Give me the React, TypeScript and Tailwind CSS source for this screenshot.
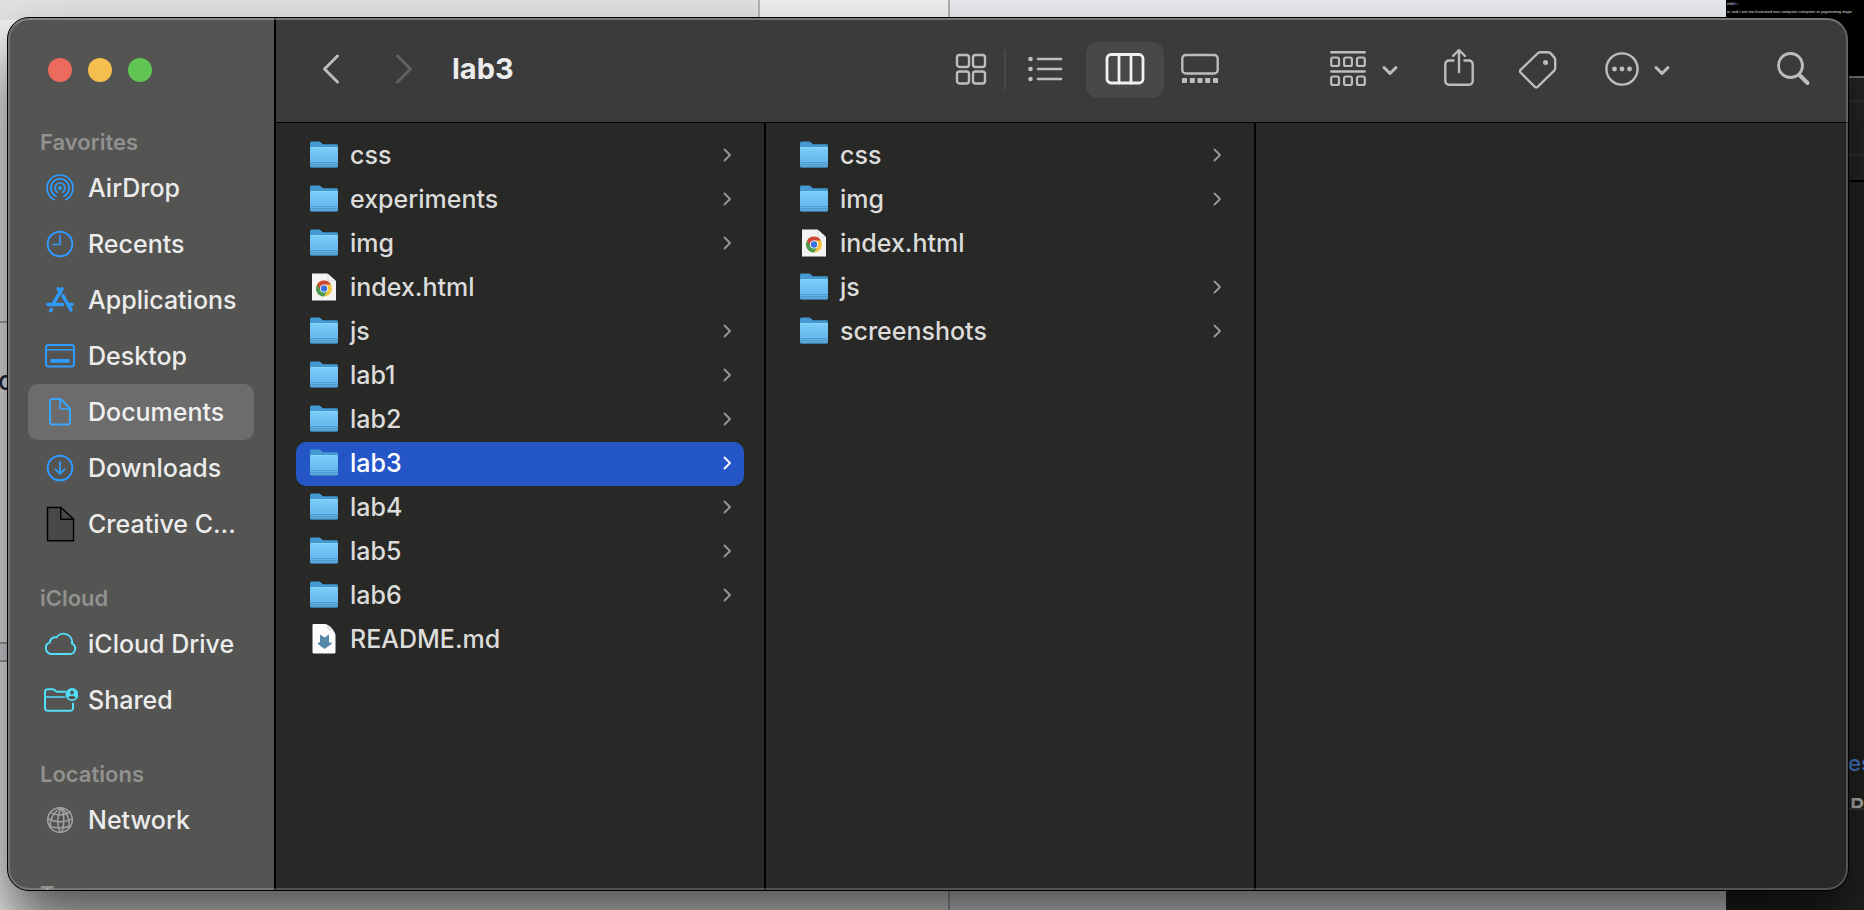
import type { ReactNode } from "react";

type Entry = { name: string; kind: "folder" | "html" | "md" };

const parentEntries: Entry[] = [
  { name: "css", kind: "folder" },
  { name: "experiments", kind: "folder" },
  { name: "img", kind: "folder" },
  { name: "index.html", kind: "html" },
  { name: "js", kind: "folder" },
  { name: "lab1", kind: "folder" },
  { name: "lab2", kind: "folder" },
  { name: "lab3", kind: "folder" },
  { name: "lab4", kind: "folder" },
  { name: "lab5", kind: "folder" },
  { name: "lab6", kind: "folder" },
  { name: "README.md", kind: "md" },
];

const childEntries: Entry[] = [
  { name: "css", kind: "folder" },
  { name: "img", kind: "folder" },
  { name: "index.html", kind: "html" },
  { name: "js", kind: "folder" },
  { name: "screenshots", kind: "folder" },
];

/* ---------- File icons ---------- */

function FolderIcon() {
  return (
    <svg width="28" height="28" viewBox="0 0 28 28" aria-hidden="true">
      <defs>
        <linearGradient id="folderFront" x1="0" y1="0" x2="0" y2="1">
          <stop offset="0" stopColor="#7ccdf8" />
          <stop offset="0.7" stopColor="#68b9ee" />
          <stop offset="1" stopColor="#57a5da" />
        </linearGradient>
      </defs>
      <path d="M0 2.2C0 1 .8.5 1.8.5h6.6c1.4 0 2 .5 2.8 1.3.8.9 1.4 1.5 2.8 1.5h12.4c1 0 1.6.6 1.6 1.6V10H0z" fill="#4599d3" />
      <path d="M0 7.3C0 6.5.5 6.2 1.2 6.2h25.6c.8 0 1.2.3 1.2 1.1V25c0 .9-.6 1.4-1.4 1.4H1.4C.6 26.4 0 25.9 0 25z" fill="url(#folderFront)" />
      <path d="M.6 6.7h26.8" stroke="#8bdcfb" strokeWidth=".8" />
      <path d="M0 21.500h28M0 23.500h28" stroke="#4390c4" strokeWidth=".8" opacity=".8" />
      <path d="M.6 26.3h26.8" stroke="#3d83b5" strokeWidth=".8" />
    </svg>
  );
}

function HtmlIcon() {
  return (
    <svg width="28" height="28" viewBox="0 0 28 28" aria-hidden="true">
      <path d="M2 .5h15.5L26 8v19.5H2z" fill="#f4f4f4" />
      <path d="M17.5.5 26 8.300h-7.5a1 1 0 0 1-1-1z" fill="#d2d2d2" />
      <path d="M18.5 1.5 25 7.5h-5.5a1 1 0 0 1-1-1z" fill="#fafafa" />
      <circle cx="14" cy="15.5" r="8" fill="#f3c443" />
      <path d="M7.072 11.5A8 8 0 0 0 14 23.5l3.464-6L14 15.5z" fill="#4a9a51" />
      <path d="M7.072 11.5A8 8 0 0 1 20.928 11.5H14v4h-4.500z" fill="#cf4638" />
      <circle cx="14" cy="15.5" r="4" fill="#fff" />
      <circle cx="14" cy="15.5" r="3.2" fill="#3a70de" />
    </svg>
  );
}

function MarkdownIcon() {
  return (
    <svg width="28" height="32" viewBox="0 0 28 32" aria-hidden="true">
      <path d="M3.5 1H15c5 1.5 9 6 10.5 11v17.5a1 1 0 0 1-1 1h-21a1 1 0 0 1-1-1V2a1 1 0 0 1 1-1z" fill="#fdfdfd" />
      <path d="M15 1c2 1.3 2.3 3.5 2.5 5.5 3.5.3 6.5 1.8 8 5.5C24 6.5 20 2.300 15 1z" fill="#e2e2e2" />
      <path d="M10 11.5l4.5 3 4.500-3v8h2.5v1.5L14.5 26 8 21v-1.5h2z" fill="#5588a6" />
    </svg>
  );
}

const entryIcons: Record<Entry["kind"], ReactNode> = {
  folder: <FolderIcon />,
  html: <HtmlIcon />,
  md: <MarkdownIcon />,
};

/* ---------- Sidebar icons ---------- */

function SideSvg({ children, tone = "text-[#2f9bff]" }: { children: ReactNode; tone?: string }) {
  return (
    <svg
      width="36"
      height="36"
      viewBox="0 0 36 36"
      fill="none"
      stroke="currentColor"
      strokeWidth="2"
      strokeLinecap="round"
      strokeLinejoin="round"
      className={tone}
      aria-hidden="true"
    >
      {children}
    </svg>
  );
}

const AirDropIcon = (
  <SideSvg>
    <circle cx="18" cy="18" r="2" fill="currentColor" stroke="none" />
    <g strokeWidth="1.7">
      <path d="M15.3 22.2a5 5 0 1 1 5.4 0" />
      <path d="M14 26.2a9.1 9.1 0 1 1 8 0" />
      <path d="M12.3 29.7a13 13 0 1 1 11.4 0" />
    </g>
  </SideSvg>
);

const RecentsIcon = (
  <SideSvg>
    <circle cx="18" cy="18" r="12.3" />
    <path d="M18 9.5V18.500h-7" strokeWidth="1.6" />
  </SideSvg>
);

const ApplicationsIcon = (
  <SideSvg>
    <g strokeWidth="3.4">
      <path d="M20 6.8 12 20.300M16.2 6.8l2.3 3.700" />
      <path d="M6 22.5h14.500M27 22.500h3" />
      <path d="M21 13.8 29 28M9.500 27.500l-1 1.3" />
    </g>
  </SideSvg>
);

const DesktopIcon = (
  <SideSvg>
    <rect x="4" y="7" width="28" height="21.5" rx="2.5" />
    <path d="M4 11.8h28" strokeWidth="1.6" />
    <rect x="8.5" y="21" width="19" height="3.8" rx=".8" fill="currentColor" stroke="none" />
  </SideSvg>
);

const DocumentsIcon = (
  <SideSvg tone="text-[#3aa4ff]">
    <path d="M10 5h8.500L28 14.500V28a2.500 2.500 0 0 1-2.500 2.500H10.500A2.500 2.500 0 0 1 8 28V7.500A2.500 2.500 0 0 1 10 5z" />
    <path d="M18.2 5.500v8c0 1 .5 1.5 1.5 1.500h8" strokeWidth="1.7" />
  </SideSvg>
);

const DownloadsIcon = (
  <SideSvg>
    <circle cx="18" cy="18" r="12.3" />
    <path d="M18 12v11.500M13.500 19.300 18 23.800l4.500-4.500" strokeWidth="1.8" />
  </SideSvg>
);

const BlankFileIcon = (
  <SideSvg tone="text-black">
    <g strokeWidth="1.4" strokeLinejoin="miter">
      <path d="M5.500 1.500H19L31.500 13v21.800h-26z" fill="#484847" />
      <path d="M18.700 1.500v11.700h12.800" />
    </g>
  </SideSvg>
);

const CloudIcon = (
  <SideSvg tone="text-[#53defa]">
    <path d="M9 28a6 6 0 0 1-1.200-11.600 5.300 5.300 0 0 1 6.600-4.900 8.600 8.600 0 0 1 15.600 6.200 5.400 5.400 0 0 1-2.500 10.300z" />
  </SideSvg>
);

const SharedIcon = (
  <SideSvg tone="text-[#53defa]">
    <path d="M23 9.700h-8.300l-2.200-1.800c-.7-.5-1.200-.7-2.200-.7H5.800A2.800 2.800 0 0 0 3 10v16a2.800 2.800 0 0 0 2.800 2.800h22.400A2.800 2.800 0 0 0 31 26v-4.500" />
    <path d="M3 15h19.500" strokeWidth="1.7" />
    <circle cx="30" cy="12.500" r="6.500" fill="currentColor" stroke="none" />
    <circle cx="30" cy="10.500" r="1.900" fill="#545452" stroke="none" />
    <path d="M26.300 15.800c.7-2.800 6.700-2.800 7.400 0-2 2-5.400 2-7.400 0z" fill="#545452" stroke="none" />
  </SideSvg>
);

const NetworkIcon = (
  <SideSvg tone="text-[#a0a09f]">
    <g strokeWidth="1.5">
      <circle cx="18" cy="18" r="12.3" />
      <path d="M19.500 5.800c-8 4-12 12-11.200 19.200M19.500 5.800c-4 7-5 16-1.500 24.400M19.500 5.800c3 6 3 16 .500 24.400M19.500 5.800c6 5 8.500 12 7.500 20" />
      <path d="M8.500 10.500c5 3.500 14 3.500 19.500-.8M5.900 16.500c6.500 4.200 17.500 4.200 24.300.2M7.800 24.500c5.500 1.800 14.500 1.800 20-.2" />
    </g>
  </SideSvg>
);

type Place = { label: string; icon: ReactNode; active?: boolean };

const sections: { title: string; places: Place[] }[] = [
  {
    title: "Favorites",
    places: [
      { label: "AirDrop", icon: AirDropIcon },
      { label: "Recents", icon: RecentsIcon },
      { label: "Applications", icon: ApplicationsIcon },
      { label: "Desktop", icon: DesktopIcon },
      { label: "Documents", icon: DocumentsIcon, active: true },
      { label: "Downloads", icon: DownloadsIcon },
      { label: "Creative C...", icon: BlankFileIcon },
    ],
  },
  {
    title: "iCloud",
    places: [
      { label: "iCloud Drive", icon: CloudIcon },
      { label: "Shared", icon: SharedIcon },
    ],
  },
  { title: "Locations", places: [{ label: "Network", icon: NetworkIcon }] },
  { title: "Tags", places: [] },
];

function Sidebar() {
  return (
    <aside className="flex w-[268px] shrink-0 flex-col overflow-hidden border-r-2 border-black bg-[#545452]">
      <div className="flex h-[104px] shrink-0 items-center gap-4 pl-10">
        <button aria-label="Close" className="size-6 rounded-full bg-[#ed6a5e]" />
        <button aria-label="Minimize" className="size-6 rounded-full bg-[#f5bf4f]" />
        <button aria-label="Zoom" className="size-6 rounded-full bg-[#61c554]" />
      </div>
      <nav className="flex shrink-0 flex-col gap-7 px-5 pt-[2px]">
        {sections.map((section) => (
          <section key={section.title}>
            <h2 className="flex h-9 items-center pl-3 text-[22px] font-semibold text-[#91918f]">{section.title}</h2>
            <ul>
              {section.places.map((place) => (
                <li key={place.label}>
                  <a
                    href={"#" + place.label}
                    className={
                      place.active
                        ? "flex h-14 items-center gap-[10px] rounded-[10px] bg-[#6c6c6c] pl-[14px] text-[#f0f0f0]"
                        : "flex h-14 items-center gap-[10px] rounded-[10px] pl-[14px] text-[#ececec]"
                    }
                  >
                    {place.icon}
                    <span className="whitespace-nowrap">{place.label}</span>
                  </a>
                </li>
              ))}
            </ul>
          </section>
        ))}
      </nav>
    </aside>
  );
}

/* ---------- Toolbar ---------- */

function ToolSvg({ w, sw = 2.4, children }: { w: number; sw?: number; children: ReactNode }) {
  return (
    <svg
      width={w}
      height={40}
      viewBox={`0 1 ${w} 40`}
      fill="none"
      stroke="currentColor"
      strokeWidth={sw}
      strokeLinecap="round"
      strokeLinejoin="round"
      overflow="visible"
      aria-hidden="true"
    >
      {children}
    </svg>
  );
}

function Caret() {
  return (
    <ToolSvg w={16} sw={3}>
      <path d="M2 18.500 8 24.500 14 18.500" />
    </ToolSvg>
  );
}

function Toolbar() {
  return (
    <header className="flex h-[105px] shrink-0 items-center border-b border-black bg-[#3b3b3b] pr-[38px] pl-[45px] text-[#bdbdbd]">
      <button aria-label="Back">
        <ToolSvg w={20} sw={3}>
          <path d="M16.500 7 3.500 20l13 13" />
        </ToolSvg>
      </button>
      <button aria-label="Forward" className="ml-[53px] text-[#616161]" disabled>
        <ToolSvg w={20} sw={3}>
          <path d="M3.500 7l13 13-13 13" />
        </ToolSvg>
      </button>
      <h1 className="ml-[38px] pb-[2px] text-[29px] font-bold text-[#ececec]">lab3</h1>

      <div className="ml-auto flex items-center" role="group" aria-label="View">
        <button aria-label="Icons" className="flex h-14 w-16 items-center justify-center pr-[2px]">
          <ToolSvg w={32}>
            <rect x="2" y="6" width="12" height="12" rx="2.5" />
            <rect x="18" y="6" width="12" height="12" rx="2.5" />
            <rect x="2" y="22.5" width="12" height="12" rx="2.5" />
            <rect x="18" y="22.5" width="12" height="12" rx="2.5" />
          </ToolSvg>
        </button>
        <span className="h-10 w-[2px] bg-[#494949]" />
        <button aria-label="List" className="flex h-14 w-20 items-center justify-center pr-[2px]">
          <ToolSvg w={36} sw={2.6}>
            <path d="M11 10h23M11 20h23M11 30h23" />
            <g fill="currentColor" stroke="none">
              <circle cx="3.500" cy="10" r="2.3" />
              <circle cx="3.500" cy="20" r="2.3" />
              <circle cx="3.500" cy="30" r="2.3" />
            </g>
          </ToolSvg>
        </button>
        <button
          aria-label="Columns"
          aria-pressed="true"
          className="flex h-14 w-[78px] items-center justify-center rounded-xl bg-[#484848] text-[#f1f1f1]"
        >
          <ToolSvg w={40} sw={2.8}>
            <rect x="2" y="5.500" width="36" height="28.500" rx="4" />
            <path d="M14 6v28M26 6v28" />
          </ToolSvg>
        </button>
        <button aria-label="Gallery" className="flex h-14 w-[72px] items-center justify-center">
          <ToolSvg w={40}>
            <rect x="2.300" y="6" width="35.400" height="18.500" rx="3.500" />
            <g fill="currentColor" stroke="none">
              <rect x="2" y="29" width="5" height="5" rx=".6" />
              <rect x="9.800" y="29" width="5" height="5" rx=".6" />
              <rect x="17.500" y="29" width="5" height="5" rx=".6" />
              <rect x="25.200" y="29" width="5" height="5" rx=".6" />
              <rect x="33" y="29" width="5" height="5" rx=".6" />
            </g>
          </ToolSvg>
        </button>
      </div>

      <div className="ml-[94px] flex items-center gap-[46px]">
        <button aria-label="Group" className="flex items-center gap-4">
          <ToolSvg w={36} sw={2.2}>
            <path d="M1.300 3.300h33.400M1.300 22.500h33.400" strokeWidth="2.4" />
            <rect x="1.200" y="8.500" width="7.800" height="8.500" rx="1.800" />
            <rect x="14.100" y="8.500" width="7.800" height="8.500" rx="1.800" />
            <rect x="27" y="8.500" width="7.800" height="8.500" rx="1.800" />
            <rect x="1.200" y="27.500" width="7.800" height="8.500" rx="1.800" />
            <rect x="14.100" y="27.500" width="7.800" height="8.500" rx="1.800" />
            <rect x="27" y="27.500" width="7.800" height="8.500" rx="1.800" />
          </ToolSvg>
          <Caret />
        </button>
        <button aria-label="Share">
          <ToolSvg w={30}>
            <path d="M9.500 11.500H5A3.700 3.700 0 0 0 1.300 15.200V32A3.700 3.700 0 0 0 5 35.700h20A3.700 3.700 0 0 0 28.700 32V15.200A3.700 3.700 0 0 0 25 11.500h-4.500" />
            <path d="M15 23V1.500M9 7l6-6 6 6" />
          </ToolSvg>
        </button>
        <button aria-label="Tags">
          <ToolSvg w={38}>
            <path d="M20 3.300h8c1.300 0 2.200.4 3 1.300l3 3.500c.8 1 1.200 1.800 1.200 3v8c0 1-.3 1.800-1 2.500L18 37.500c-1.300 1.300-2.300 1.300-3.500 0L1 24c-1.300-1.300-1.300-2.300 0-3.500L17.500 4.500c.8-.8 1.500-1.200 2.500-1.200z" />
            <circle cx="25.500" cy="13.500" r="2.500" fill="currentColor" stroke="none" />
          </ToolSvg>
        </button>
        <button aria-label="More" className="flex items-center gap-4">
          <ToolSvg w={34}>
            <circle cx="18" cy="20" r="15.600" />
            <g fill="currentColor" stroke="none">
              <circle cx="10.500" cy="20" r="2.4" />
              <circle cx="18" cy="20" r="2.4" />
              <circle cx="25.500" cy="20" r="2.4" />
            </g>
          </ToolSvg>
          <Caret />
        </button>
      </div>
      <button aria-label="Search" className="ml-[106px]">
        <ToolSvg w={34} sw={2.8}>
          <circle cx="14.500" cy="16.500" r="12" />
          <path d="M23.500 26 31.500 34" strokeWidth="4" />
        </ToolSvg>
      </button>
    </header>
  );
}

/* ---------- Column browser ---------- */

function Column({ entries, selected }: { entries: Entry[]; selected?: string }) {
  return (
    <ul className="w-[490px] shrink-0 border-r-2 border-black px-5 pt-[11px]">
      {entries.map((entry) => {
        const active = entry.name === selected;
        return (
          <li key={entry.name}>
            <button
              className={
                active
                  ? "flex h-11 w-full items-center gap-3 rounded-[10px] bg-[#2456c8] pr-3 pb-[2px] pl-[14px] text-left text-white"
                  : "flex h-11 w-full items-center gap-3 rounded-[10px] pr-3 pb-[2px] pl-[14px] text-left text-[#dcdcdb]"
              }
            >
              {entryIcons[entry.kind]}
              <span className="flex-1">{entry.name}</span>
              {entry.kind === "folder" && (
                <svg
                  width="10"
                  height="16"
                  viewBox="0 0 10 16"
                  fill="none"
                  stroke="currentColor"
                  strokeWidth="1.8"
                  strokeLinecap="round"
                  strokeLinejoin="round"
                  className={active ? "text-white" : "text-[#989897]"}
                  aria-hidden="true"
                >
                  <path d="M2.500 2.500 8 8 2.500 13.500" />
                </svg>
              )}
            </button>
          </li>
        );
      })}
    </ul>
  );
}

/* ---------- Windows behind the file browser ---------- */

function Backdrop() {
  return (
    <div className="absolute inset-0 flex" aria-hidden="true">
      <div className="relative flex min-w-0 flex-1 bg-[#f0f0f0]">
        <div className="w-[760px] bg-[#f0f0f0]">
          <div className="h-5 border-r-2 border-[#b5b5b5] bg-[#e2e2e2]" />
        </div>
        <div className="w-[190px] border-r-2 border-[#b0b0b0]" />
        <div className="flex-1 bg-[#e8eaee]" />
        <div className="absolute top-[321px] left-0 h-[2px] w-4 bg-[#a8a8a8]" />
        <div className="absolute top-[365px] left-[-2px] text-[26px] leading-8 text-[#1f2a38]">c</div>
        <div className="absolute top-[642px] left-0 h-5 w-4 border-y-2 border-[#a0a0a4] bg-[#dedee4]" />
      </div>
      <div className="relative w-[138px] overflow-hidden bg-black">
        <div className="absolute top-0 left-[1px] font-[Liberation_Sans,sans-serif] text-[4px] leading-[8px] font-normal whitespace-nowrap text-[#e0e0e0]">
          ntld<span className="text-[#4f8fd0]">/b&gt;</span>
          <br />
          er and i are too frustrated non computer computer or prgamming major
        </div>
        <div className="absolute inset-x-0 top-[76px] bottom-0 border-t-2 border-[#777777] bg-[#272727]">
          <div className="mt-[22px] h-[56px] border-y-2 border-[#333333]" />
          <div className="mt-6 h-[628px] border-t-2 border-black bg-[#222221]" />
          <div className="h-[104px] border-t-2 border-[#3a3a3a] bg-[#222221]" />
        </div>
        <div className="absolute top-[747px] left-[122px] text-[22px] leading-8 text-[#4a7fd6]">es</div>
        <div className="absolute top-[792px] left-[124px] h-4 overflow-hidden text-[22px] leading-7 font-semibold text-[#b8b8b8]">
          R
        </div>
      </div>
    </div>
  );
}

export default function App() {
  return (
    <div className="relative flex h-screen w-full overflow-hidden pt-[17px] pr-[15px] pb-[19px] pl-[7px] font-[Inter,sans-serif] text-[25px] leading-8 font-medium">
      <Backdrop />
      <main className="relative flex min-w-0 flex-1 overflow-hidden rounded-[22px] border border-black bg-[#282826] shadow-[0_36px_60px_rgba(0,0,0,0.65)]">
        <Sidebar />
        <div className="flex min-w-0 flex-1 flex-col">
          <Toolbar />
          <div className="flex min-h-0 flex-1">
            <Column entries={parentEntries} selected="lab3" />
            <Column entries={childEntries} />
            <div className="flex-1" />
          </div>
        </div>
        <div className="pointer-events-none absolute inset-0 rounded-[21px] border-2 border-white/20 border-t-white/30" />
      </main>
    </div>
  );
}
